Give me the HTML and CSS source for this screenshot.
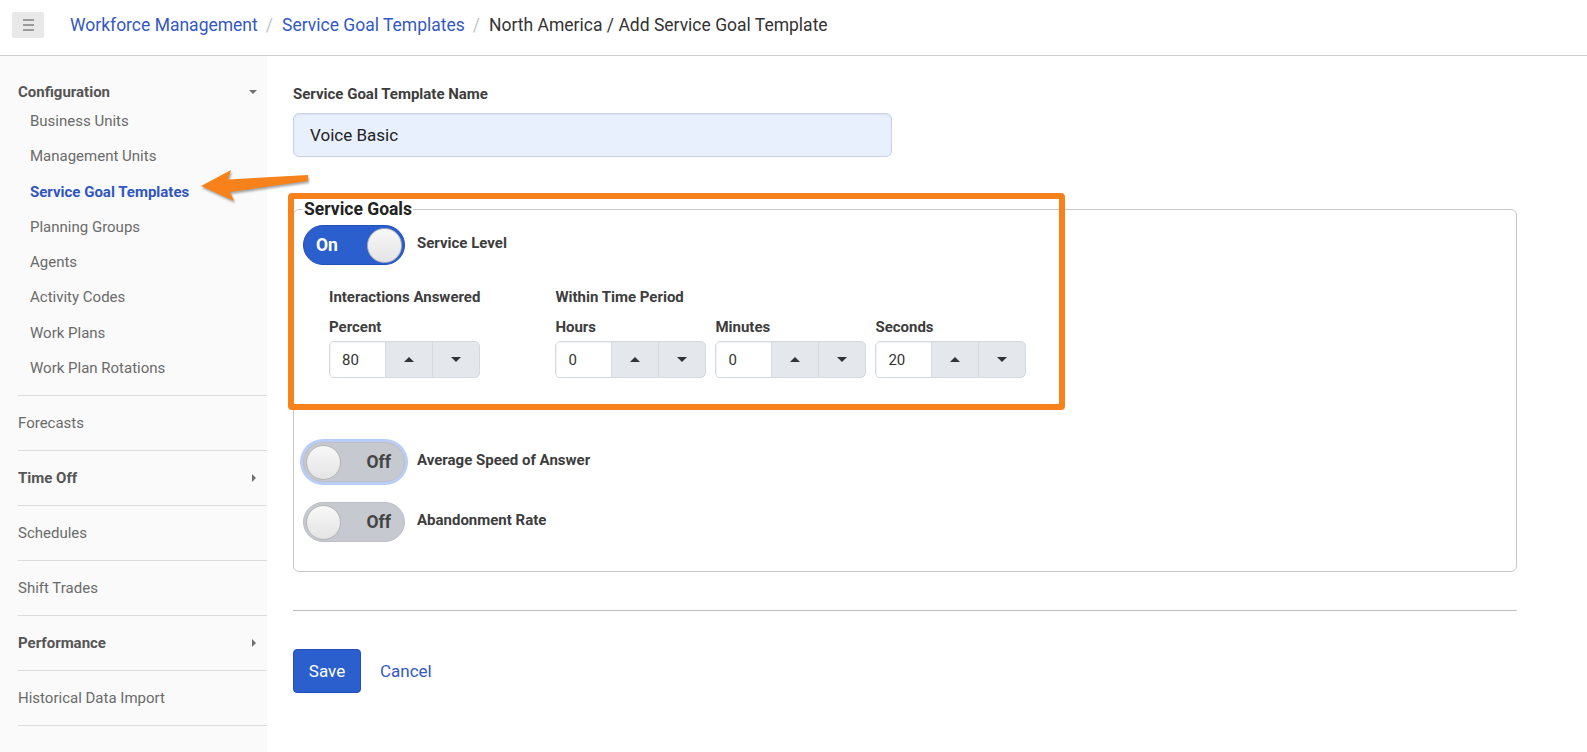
FILE: index.html
```html
<!DOCTYPE html>
<html lang="en">
<head>
<meta charset="utf-8">
<title>Add Service Goal Template</title>
<link rel="stylesheet" href="styles.css">
</head>
<body>
<header class="topbar">
  <button class="menu-btn" aria-label="Menu"><span></span><span></span><span></span></button>
  <nav class="crumbs">
    <a href="#">Workforce Management</a><span class="sep">/</span><a href="#">Service Goal Templates</a><span class="sep">/</span><span class="current">North America / Add Service Goal Template</span>
  </nav>
</header>

<div class="layout">
  <aside class="sidebar">
    <div class="nav-group">
      <div class="nav-head"><span>Configuration</span><span class="caret-down"></span></div>
      <div class="nav-sub">
        <a href="#">Business Units</a>
        <a href="#">Management Units</a>
        <a href="#" class="active">Service Goal Templates</a>
        <a href="#">Planning Groups</a>
        <a href="#">Agents</a>
        <a href="#">Activity Codes</a>
        <a href="#">Work Plans</a>
        <a href="#">Work Plan Rotations</a>
      </div>
    </div>
    <div class="nav-row">Forecasts</div>
    <div class="nav-row bold"><span>Time Off</span><span class="caret-right"></span></div>
    <div class="nav-row">Schedules</div>
    <div class="nav-row">Shift Trades</div>
    <div class="nav-row bold"><span>Performance</span><span class="caret-right"></span></div>
    <div class="nav-row">Historical Data Import</div>
  </aside>

  <main class="main">
    <form class="form">
      <label class="field-label" for="tplname">Service Goal Template Name</label>
      <input id="tplname" class="text-input" type="text" value="Voice Basic">

      <fieldset class="goals">
        <legend>Service Goals</legend>

        <div class="goal-row">
          <span class="toggle on"><span class="toggle-text">On</span><span class="knob"></span></span>
          <span class="goal-label">Service Level</span>
        </div>

        <div class="sl-details">
          <div class="sl-col">
            <div class="col-title">Interactions Answered</div>
            <div class="sub-fields">
              <div class="sub-field">
                <div class="sub-label">Percent</div>
                <div class="spinner"><span class="spin-val">80</span><span class="spin-btn"><span class="tri-up"></span></span><span class="spin-btn"><span class="tri-down"></span></span></div>
              </div>
            </div>
          </div>
          <div class="sl-col">
            <div class="col-title">Within Time Period</div>
            <div class="sub-fields">
              <div class="sub-field">
                <div class="sub-label">Hours</div>
                <div class="spinner"><span class="spin-val">0</span><span class="spin-btn"><span class="tri-up"></span></span><span class="spin-btn"><span class="tri-down"></span></span></div>
              </div>
              <div class="sub-field">
                <div class="sub-label">Minutes</div>
                <div class="spinner"><span class="spin-val">0</span><span class="spin-btn"><span class="tri-up"></span></span><span class="spin-btn"><span class="tri-down"></span></span></div>
              </div>
              <div class="sub-field">
                <div class="sub-label">Seconds</div>
                <div class="spinner"><span class="spin-val">20</span><span class="spin-btn"><span class="tri-up"></span></span><span class="spin-btn"><span class="tri-down"></span></span></div>
              </div>
            </div>
          </div>
        </div>

        <div class="goal-row off-first">
          <span class="toggle off focused"><span class="knob"></span><span class="toggle-text">Off</span></span>
          <span class="goal-label">Average Speed of Answer</span>
        </div>
        <div class="goal-row off-second">
          <span class="toggle off"><span class="knob"></span><span class="toggle-text">Off</span></span>
          <span class="goal-label">Abandonment Rate</span>
        </div>
      </fieldset>

      <hr class="rule">

      <div class="actions">
        <button type="button" class="btn-save">Save</button>
        <a href="#" class="cancel">Cancel</a>
      </div>
    </form>
  </main>
</div>

<div class="annot-box"></div>
<svg class="annot-arrow" width="125" height="50" viewBox="0 0 125 50" aria-hidden="true">
  <path d="M6 26 L36 10 L33 19.5 L113 15 L113 21 L35 32 L39 41 Z" fill="#f7821b"/>
</svg>
</body>
</html>
```

FILE: styles.css
```css
* { box-sizing: border-box; }

body {
  margin: 0;
  font-family: Roboto, "Liberation Sans", Arial, sans-serif;
  color: #333;
  background: #fff;
  position: relative;
}

a { text-decoration: none; }

/* ---------- top bar ---------- */
.topbar {
  height: 56px;
  border-bottom: 1px solid #cfcfcf;
  display: flex;
  align-items: center;
  padding: 12px 0 17px 12px;
  gap: 26px;
}

.menu-btn {
  width: 32px;
  height: 26px;
  padding: 0;
  border: 0;
  border-radius: 2px;
  background: #e8e8e8;
  display: flex;
  flex-direction: column;
  align-items: center;
  justify-content: center;
  gap: 3px;
}
.menu-btn span {
  width: 11px;
  height: 2px;
  background: #9b9b9b;
}

.crumbs {
  font-size: 17.5px;
  line-height: 26px;
  display: flex;
  align-items: center;
}
.crumbs a { color: #3358c4; }
.crumbs .sep { color: #c4c4c4; margin: 0 9px 0 8px; }
.crumbs .current { color: #333; }

/* ---------- layout ---------- */
.layout {
  display: flex;
}

.sidebar {
  width: 267px;
  flex: none;
  min-height: 696px;
  background: #fafafa;
  padding-left: 18px;
}

.nav-group {
  padding: 24px 0 8.6px;
  border-bottom: 1px solid #dcdcdc;
}
.nav-head {
  height: 24px;
  display: flex;
  align-items: center;
  justify-content: space-between;
  padding-right: 10px;
  font-size: 15px;
  font-weight: 700;
  color: #555;
}
.caret-down {
  width: 0;
  height: 0;
  border-left: 4px solid transparent;
  border-right: 4px solid transparent;
  border-top: 4px solid #707070;
}
.caret-right {
  width: 0;
  height: 0;
  border-top: 4px solid transparent;
  border-bottom: 4px solid transparent;
  border-left: 4px solid #707070;
  margin-right: 1px;
}
.nav-sub a {
  display: block;
  height: 35.3px;
  line-height: 35.3px;
  padding-left: 12px;
  font-size: 15px;
  color: #6a6a6a;
}
.nav-sub a.active {
  color: #2f55c0;
  font-weight: 700;
}

.nav-row {
  height: 55px;
  border-bottom: 1px solid #dcdcdc;
  display: flex;
  align-items: center;
  justify-content: space-between;
  padding-right: 10px;
  font-size: 15px;
  color: #6a6a6a;
}
.nav-row.bold {
  font-weight: 700;
  color: #555;
}

/* ---------- main ---------- */
.main {
  flex: 1;
  padding: 29px 0 40px 26px;
}
.form { width: 1224px; }

.field-label {
  display: block;
  font-size: 15px;
  line-height: 18px;
  font-weight: 700;
  color: #3d3d3d;
  margin-bottom: 10px;
}

.text-input {
  display: block;
  width: 599px;
  height: 44px;
  border: 1px solid #c9d3e2;
  border-radius: 6px;
  background: #e8f0fe;
  padding: 0 16px;
  font-family: inherit;
  font-size: 17px;
  color: #222;
  box-shadow: inset 0 1px 2px rgba(0,0,0,0.06);
}

.goals {
  margin: 42px 0 0;
  padding: 6px 9px 29px;
  border: 1px solid #c8c8c8;
  border-radius: 6px;
  min-width: 0;
}
.goals legend {
  padding: 0 1px;
  font-size: 17.5px;
  line-height: 20px;
  font-weight: 700;
  color: #222;
}

.goal-row {
  display: flex;
  align-items: center;
}
.goal-row.off-first { margin-top: 64px; }
.goal-row.off-second { margin-top: 20px; }

.goal-label {
  margin-left: 12px;
  padding-bottom: 4px;
  font-size: 15px;
  font-weight: 700;
  color: #3d3d3d;
}

.toggle {
  width: 102px;
  height: 40px;
  border-radius: 20px;
  display: flex;
  align-items: center;
  padding: 0 2px;
  font-size: 17.5px;
  font-weight: 700;
}
.toggle.on {
  background: #2b5fce;
  border: 1px solid #2251b8;
  color: #fff;
  padding-left: 12px;
}
.toggle.on .knob { margin-left: auto; }
.toggle.off {
  background: #c6c9cf;
  border: 1px solid #bcc0c6;
  color: #444;
}
.toggle.off .toggle-text { margin-left: auto; margin-right: 11px; }
.toggle.focused { box-shadow: 0 0 0 3px #b9cdf6; }

.knob {
  width: 35px;
  height: 35px;
  border-radius: 50%;
  background: linear-gradient(#f8f8f8, #e4e4e4);
  border: 1px solid #b5b5b5;
  flex: none;
}

.sl-details {
  display: flex;
  gap: 75px;
  margin: 23px 0 0 26px;
}
.col-title {
  font-size: 15px;
  line-height: 18px;
  font-weight: 700;
  color: #3d3d3d;
  margin-bottom: 12px;
}
.sub-fields {
  display: flex;
  gap: 9px;
}
.sub-label {
  font-size: 15px;
  line-height: 18px;
  font-weight: 700;
  color: #3d3d3d;
  margin-bottom: 5px;
}

.spinner {
  width: 151px;
  height: 37px;
  display: flex;
  border: 1px solid #d4d9e0;
  border-radius: 5px;
  overflow: hidden;
  background: #e4e8ed;
}
.spin-val {
  width: 55px;
  background: #fff;
  display: flex;
  align-items: center;
  padding-left: 12px;
  font-size: 15px;
  color: #333;
  box-shadow: inset 1px 1px 2px rgba(0,0,0,0.06);
}
.spin-btn {
  flex: 1;
  display: flex;
  align-items: center;
  justify-content: center;
  border-left: 1px solid #d6dbe2;
}
.tri-up {
  width: 0;
  height: 0;
  border-left: 5px solid transparent;
  border-right: 5px solid transparent;
  border-bottom: 5px solid #2e3338;
}
.tri-down {
  width: 0;
  height: 0;
  border-left: 5px solid transparent;
  border-right: 5px solid transparent;
  border-top: 5px solid #2e3338;
}

.rule {
  margin: 38px 0 0;
  border: 0;
  border-top: 1px solid #bdbdbd;
}

.actions {
  margin-top: 38px;
  display: flex;
  align-items: center;
  gap: 19px;
}
.btn-save {
  width: 68px;
  height: 44px;
  border: 1px solid #2050b8;
  border-radius: 4px;
  background: #2b5fce;
  color: #fff;
  font-family: inherit;
  font-size: 17px;
}
.cancel {
  font-size: 17px;
  color: #3358c4;
}

/* ---------- annotations (overlay) ---------- */
.annot-box {
  position: absolute;
  left: 288px;
  top: 193px;
  width: 777px;
  height: 217px;
  border: 6px solid #f7821b;
  border-radius: 4px;
  pointer-events: none;
}
.annot-arrow {
  position: absolute;
  left: 195px;
  top: 160px;
  filter: drop-shadow(1px 2px 1px rgba(0,0,0,0.35));
  pointer-events: none;
}
```
